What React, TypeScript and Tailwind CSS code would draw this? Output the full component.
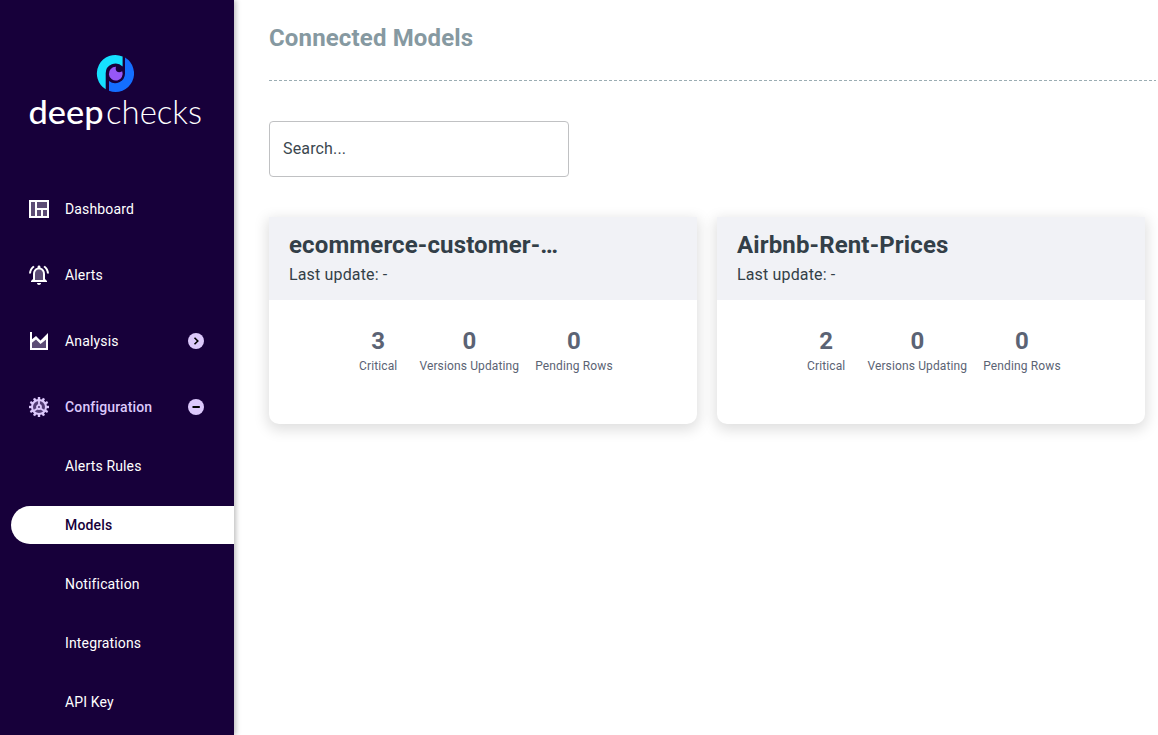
import type { ReactNode } from "react";

function Logo() {
  return (
    <svg width="176" height="80" viewBox="0 0 176 80" className="ml-[27px] block" fill="none">
      <g transform="translate(70 5)">
        <path d="M25.600 1.400 A18.500 18.500 0 0 0 8.700 34.200 V18.500 A9.800 9.800 0 0 1 25.600 11.600Z" fill="#16e0ff" />
        <path d="M28 2.600 A18.500 18.500 0 0 1 12 35.800 V25.900 A9.800 9.800 0 0 0 28 18.500Z" fill="#146eff" />
        <path d="M19 11.800 C17.800 15.600 20.500 18.800 25.200 16.200 A6.900 6.900 0 1 1 19 11.800Z" fill="#9657f7" />
      </g>
      <text x="1.500" y="74" textLength="75" lengthAdjust="spacingAndGlyphs" className="fill-white font-['Lato'] text-[33px] font-medium">deep</text>
      <text x="79" y="74" textLength="96" lengthAdjust="spacingAndGlyphs" className="fill-white font-['Lato'] text-[33px] font-light">checks</text>
    </svg>
  );
}

function DashboardIcon() {
  return (
    <svg width="20" height="18" viewBox="0 0 20 18">
      <path d="M1 1H19V17H1Z" fill="#fff" fillOpacity=".3" />
      <path d="M1 1H19V17H1ZM7 1V17M7 9H19M13 9V17" fill="none" stroke="#fff" strokeWidth="2" />
    </svg>
  );
}

function AlertsIcon() {
  return (
    <svg width="20" height="20" viewBox="0 0 20 20">
      <path d="M10 4.500C7.500 4.500 6 6.500 6 9V15H14V9C14 6.500 12.500 4.500 10 4.500Z" fill="#fff" fillOpacity=".3" />
      <path d="M16 9C16 5.900 14.400 3.400 11.500 2.700V2C11.500 1.200 10.800.5 10 .5S8.500 1.200 8.500 2V2.700C5.600 3.400 4 5.900 4 9V14L2 16V17H18V16L16 14ZM14 15H6V9C6 6.500 7.500 4.500 10 4.500S14 6.500 14 9ZM10 20C11.100 20 12 19.100 12 18H8C8 19.100 8.900 20 10 20ZM5.600 2.100L4.200.700C1.800 2.500.200 5.300 0 8.500H2C2.200 5.900 3.500 3.500 5.600 2.100ZM18 8.500H20C19.900 5.300 18.300 2.500 15.800.700L14.400 2.100C16.500 3.500 17.800 5.900 18 8.500Z" fill="#fff" />
    </svg>
  );
}

function AnalysisIcon() {
  return (
    <svg width="20" height="20" viewBox="0 0 20 20">
      <path d="M2 10L7 7L11 12L18 7V17H2Z" fill="#fff" fillOpacity=".3" />
      <path d="M2 1V18H18V6" fill="none" stroke="#fff" strokeWidth="2" />
      <path d="M2 9L7 5L11.500 9.500L19 2V7L11.500 13L7 8.500L2 12.500Z" fill="#fff" />
    </svg>
  );
}

const teeth = [0, 30, 60, 90, 120, 150, 180, 210, 240, 270, 300, 330];

function ConfigurationIcon() {
  return (
    <svg width="20" height="20" viewBox="0 0 20 20" fill="none" stroke="#dcc8fb">
      <circle cx="10" cy="10" r="7" strokeWidth="2" fill="#dcc8fb" fillOpacity=".3" />
      {teeth.map((angle) => (
        <path key={angle} d="M10 0V3" strokeWidth="2.400" transform={`rotate(${angle} 10 10)`} />
      ))}
      <circle cx="10" cy="10" r="2" strokeWidth="1.800" />
      <path d="M10 8V3M8.500 11.500L4.500 14M11.500 11.500L15.500 14" strokeWidth="1.800" />
    </svg>
  );
}

function Toggle({ open }: { open?: boolean }) {
  return (
    <svg width="16" height="16" viewBox="0 0 16 16" className="mr-[30px] ml-auto" fill="none">
      <circle cx="8" cy="8" r="8" fill="#dcc8fb" />
      <path d={open ? "M4.500 8H11.800" : "M6.500 4.700L9.800 8L6.500 11.300"} stroke="#000" strokeWidth={open ? 2 : 1.600} />
    </svg>
  );
}

function NavItem({ icon, label, accent, children }: { icon: ReactNode; label: string; accent?: boolean; children?: ReactNode }) {
  return (
    <div className={`flex h-[38px] items-center pl-[29px] text-sm tracking-[0.15px] ${accent ? "font-medium text-[#dcc8fb]" : "text-white"}`}>
      <span className="flex w-9 shrink-0 items-center">{icon}</span>
      {label}
      {children}
    </div>
  );
}

function SubItem({ label, active }: { label: string; active?: boolean }) {
  return (
    <div className={`ml-[11px] flex h-[38px] items-center rounded-l-full pl-[54px] text-sm tracking-[0.15px] ${active ? "bg-white font-medium text-[#17003a]" : "text-white"}`}>
      {label}
    </div>
  );
}

function Stat({ value, label }: { value: number; label: string }) {
  return (
    <div className="flex flex-col items-center text-[#5b6374]">
      <span className="text-2xl leading-[30px] font-bold">{value}</span>
      <span className="text-xs leading-5 tracking-[0.13px] whitespace-nowrap">{label}</span>
    </div>
  );
}

function ModelCard({ name, critical }: { name: string; critical: number }) {
  return (
    <article className="h-[207px] w-[428px] shrink-0 overflow-hidden rounded-b-[10px] bg-white shadow-[0_4px_14px_2px_rgba(0,0,0,0.13)]">
      <header className="h-[83px] bg-[#f1f2f6] px-5 pt-3 text-[#333f48]">
        <h2 className="text-2xl leading-8 font-bold tracking-[0.14px]">{name}</h2>
        <p className="mt-[2px] text-base leading-6 tracking-[0.15px]">Last update: -</p>
      </header>
      <div className="flex pt-[26px] pl-[90px]">
        <Stat value={critical} label="Critical" />
        <div className="ml-[22px]"><Stat value={0} label="Versions Updating" /></div>
        <div className="ml-4"><Stat value={0} label="Pending Rows" /></div>
      </div>
    </article>
  );
}

export default function App() {
  return (
    <div className="flex h-[735px] w-[1158px] overflow-hidden bg-white font-['Roboto',sans-serif]">
      <aside className="z-10 w-[234px] shrink-0 bg-[#17003a] pt-[50px] shadow-[2px_0_5px_rgba(0,0,0,0.25)]">
        <Logo />
        <nav className="mt-[60px]">
          <div className="flex flex-col gap-7">
            <NavItem icon={<DashboardIcon />} label="Dashboard" />
            <NavItem icon={<AlertsIcon />} label="Alerts" />
            <NavItem icon={<AnalysisIcon />} label="Analysis"><Toggle /></NavItem>
            <NavItem icon={<ConfigurationIcon />} label="Configuration" accent><Toggle open /></NavItem>
          </div>
          <div className="mt-[21px] flex flex-col gap-[21px]">
            <SubItem label="Alerts Rules" />
            <SubItem label="Models" active />
            <SubItem label="Notification" />
            <SubItem label="Integrations" />
            <SubItem label="API Key" />
          </div>
        </nav>
      </aside>
      <main className="min-w-0 grow pl-[35px]">
        <h1 className="pt-[22px] text-2xl leading-[33px] font-bold tracking-[0.15px] text-[#8699a1]">Connected Models</h1>
        <svg width="887" height="1" className="mt-[25px] block">
          <path d="M0 .5H887" stroke="#9badb3" strokeDasharray="3 2" />
        </svg>
        <input
          aria-label="Search"
          placeholder="Search..."
          className="mt-10 block h-14 w-[300px] rounded border border-[#c0c1c3] px-[13px] pb-0.5 text-base tracking-[0.15px] placeholder:text-[#3b474f]"
        />
        <section className="mt-10 flex gap-5">
          <ModelCard name="ecommerce-customer-…" critical={3} />
          <ModelCard name="Airbnb-Rent-Prices" critical={2} />
        </section>
      </main>
    </div>
  );
}
